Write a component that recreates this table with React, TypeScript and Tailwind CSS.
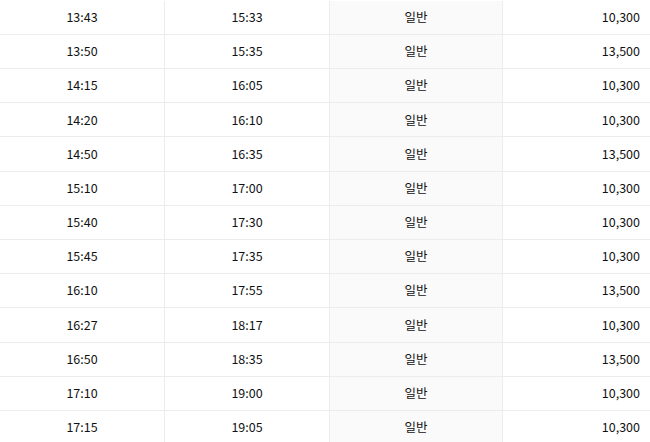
const rows = [
  ['13:43', '15:33', '일반', '10,300'],
  ['13:50', '15:35', '일반', '13,500'],
  ['14:15', '16:05', '일반', '10,300'],
  ['14:20', '16:10', '일반', '10,300'],
  ['14:50', '16:35', '일반', '13,500'],
  ['15:10', '17:00', '일반', '10,300'],
  ['15:40', '17:30', '일반', '10,300'],
  ['15:45', '17:35', '일반', '10,300'],
  ['16:10', '17:55', '일반', '13,500'],
  ['16:27', '18:17', '일반', '10,300'],
  ['16:50', '18:35', '일반', '13,500'],
  ['17:10', '19:00', '일반', '10,300'],
  ['17:15', '19:05', '일반', '10,300'],
]

export default function App() {
  return (
    <div className="w-[650px] h-[442px] overflow-hidden bg-white pt-[0.8px] text-[12.5px] text-[#111] font-['Noto_Sans_CJK_KR','Noto_Sans',sans-serif]">
      {rows.map((r, i) => (
        <div key={i} className="grid grid-cols-[165px_165px_173px_147px] h-[34.18px] border-b border-[#ececec]">
          <div className="flex items-center justify-center border-r border-[#ececec]">{r[0]}</div>
          <div className="flex items-center justify-center border-r border-[#ececec]">{r[1]}</div>
          <div className="flex items-center justify-center border-r border-[#ececec] bg-[#fafafa]">{r[2]}</div>
          <div className="flex items-center justify-end pr-[10px]">{r[3]}</div>
        </div>
      ))}
    </div>
  )
}
